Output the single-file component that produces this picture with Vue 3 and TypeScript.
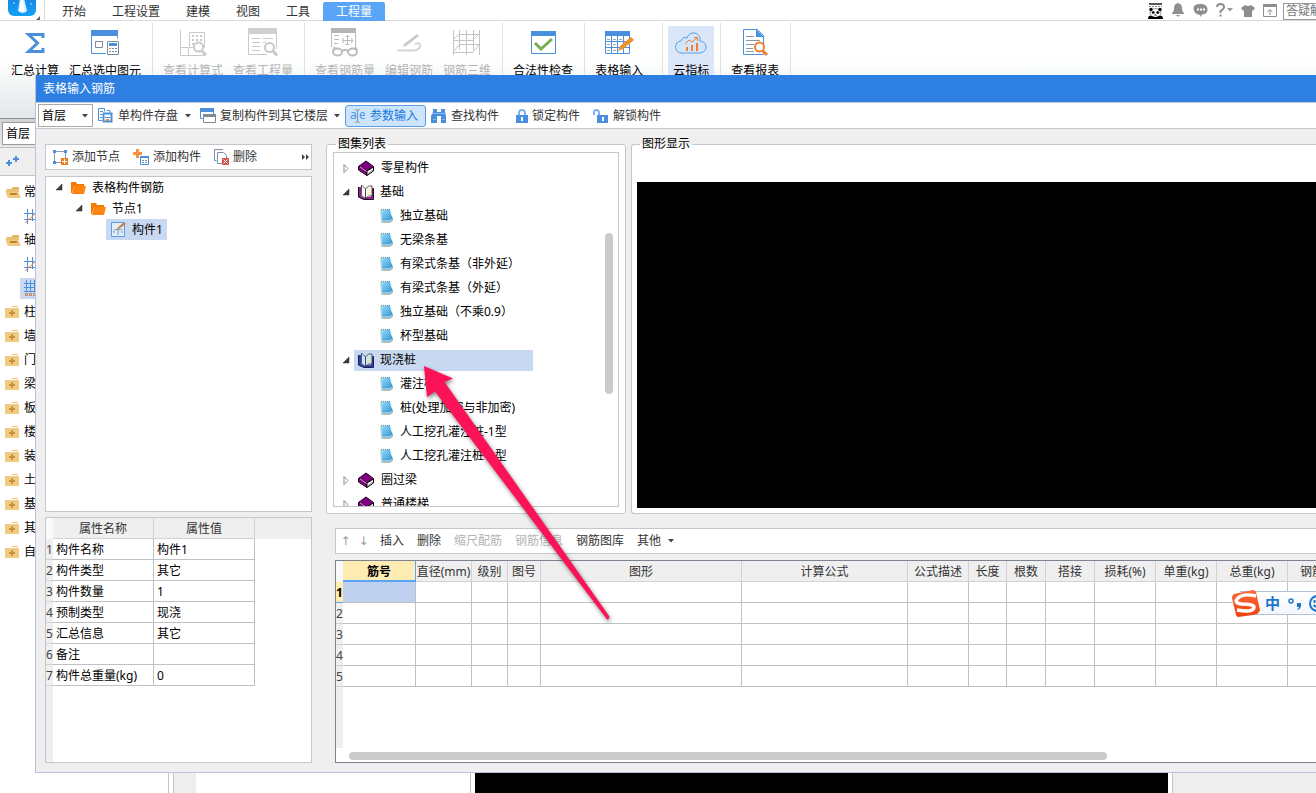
<script setup lang="ts">
import { h, ref } from 'vue'

const B = '#4a8fdd'
const G = '#c9c9c9'
const O = '#f08030'

const folderOpen =
  '<path d="M1 3h5l2-2h6v3H1z" fill="#e0b46a"/><path d="M0 5h13l3 7H3z" fill="#f0ca80"/><path d="M2 3h12v3H2z" fill="#e9bd70"/><path d="M5 8h7" stroke="#b98730" stroke-width="2"/>'
const openBook = (cover: string, page: string, line: string) =>
  `<path d="M0 3h3v9l5 3v1H6l-6-3z" fill="${cover}"/><path d="M7 13h6V4h3v11H7z" fill="${cover}"/><path d="M.5 3v10l6 2.500H15.500V5" fill="none" stroke="${line}"/><path d="M3.500 1l4 4v9.500l-4-3z" fill="${page}" stroke="${line}" stroke-width=".7"/><path d="M7.500 5l3-3h3.500v10h-3.500l-3 2.500z" fill="${page}" stroke="${line}" stroke-width=".7"/><path d="M10 4v7M12 4v7" stroke="#e6df3a" stroke-dasharray="1 1"/>`

const icons: Record<string, [number, number, string]> = {
  logo: [28, 18, `<defs><linearGradient id="lg" x1="0" y1="0" x2="0" y2="1"><stop offset="0" stop-color="#1b7fe0"/><stop offset="1" stop-color="#12a2f6"/></linearGradient></defs><path d="M0-8h28V10a6 6 0 0 1-6 6H6a6 6 0 0 1-6-6z" fill="url(#lg)"/><path d="M12-2h4l3 13q-4 4-9 0z" fill="#d6f1ff"/><path d="M13-2h2l1 13h-4z" fill="#fff"/><circle cx="6" cy="3" r="1" fill="#7fc6ff"/><circle cx="23" cy="4" r="1" fill="#7fc6ff"/>`],
  sigma: [32, 32, `<path d="M24 11V7.500H9.500l9 8.500-9 8.500H24V21" fill="none" stroke="${B}" stroke-width="3"/>`],
  calc: [32, 32, `<path d="M2 3h27v6H2z" fill="${B}"/><path d="M28.500 9v3" fill="none" stroke="#8fa3b8"/><path d="M2.500 9v17.500H17" fill="none" stroke="${B}"/><path d="M6.500 14.500h7v6h-7z" fill="none" stroke="#7c8b9a"/><path d="M18.500 14.500h11v13h-11z" fill="#fff" stroke="#7c8b9a"/><path d="M20 16h8v3h-8z" fill="${B}"/><path d="M20 21.500h9M20 24.500h9" stroke="#7c8b9a" stroke-dasharray="2 1"/><path d="M20 21h2v1h-2z" fill="${O}"/>`],
  formula: [32, 32, `<g fill="none" stroke="${G}"><path d="M3.500 3v25.500H28M3.500 20.500h8v8"/><path d="M12.500 5.500h15v15h-15z"/><path d="M15 9h11M15 13h11M15 17h4" stroke-width="2" stroke-dasharray="2 2"/><circle cx="21.500" cy="20" r="4.500" fill="#fff" stroke-width="2"/><path d="M25 24l4 4" stroke-width="3"/></g>`],
  quantity: [32, 32, `<path d="M1 1h29v6H1z" fill="#d0d0d0"/><g fill="none" stroke="${G}"><path d="M1.500 7v20.500H20M29.500 7v15"/><path d="M5 11.500h8M5 15.500h8M5 19.500h8M5 23.500h8M16 11.500h10M16 15.500h3" stroke-width="1"/><circle cx="22.500" cy="20.500" r="4.500" fill="#fff" stroke-width="2"/><path d="M26 24l4 4.500" stroke-width="3"/></g>`],
  rebar: [32, 32, `<path d="M2 1h25v5H2z" fill="#b5b5b5"/><g fill="none" stroke="#bdbdbd"><path d="M2.500 6v14M26.500 6v14M5 8.500h5M5 12.500h5M5 16.500h4M18.500 8v10M13 13.500h11"/><path d="M16.500 9.500h4M16.500 17.500h4M14.500 11q-2 2.500 0 5M22.500 11q2 2.500 0 5"/><ellipse cx="8.500" cy="25" rx="4.500" ry="3.500" stroke-width="2" fill="#fff"/><ellipse cx="23.500" cy="25" rx="4.500" ry="3.500" stroke-width="2" fill="#fff"/><path d="M13 24q3-2 6 0M4 23l2-3M28 23l-2-3" stroke-width="2"/></g>`],
  edit: [32, 32, `<path d="M11 17L24 7l2 2-13 10-3 1z" fill="${G}"/><path d="M4 23.500h17q6-1 6-5t-5-1" fill="none" stroke="#d4d4d4" stroke-width="2"/>`],
  frame3d: [32, 32, `<path d="M2.500 3v25M8.500 3v20M22.500 3v20M28.500 3v25M15.500 3v25M8 7.500h21M2 13.500h20M8 17.500h21M2 25.500h20M2 13l6-6M2 25l6-7M22 13l6-6M22 25l6-7" fill="none" stroke="#c4c4c4"/>`],
  check: [32, 32, `<path d="M4.500 4.500h24v22h-24z" fill="#fff" stroke="${B}"/><path d="M4 4h25v5H4z" fill="${B}"/><path d="M8 16l6 6L25 12" fill="none" stroke="#76ad52" stroke-width="3"/>`],
  grid: [32, 32, `<path d="M2.500 4.500h24v22h-24z" fill="#fff" stroke="${B}"/><path d="M2 4h25v5H2z" fill="${B}"/><path d="M8.500 9v17M14.500 9v17M20.500 9v17M2 14.500h25M2 20.500h25" stroke="${B}"/><path d="M4 12.500h3M10 12.500h3M16 12.500h3M4 17.500h3M10 17.500h3M4 23.500h3M10 23.500h3" stroke="#a0a8b2"/><path d="M15 24l2-5 11-9 3 3-11 9z" fill="#f0912b"/>`],
  cloud: [32, 32, `<path d="M7 26a6 6 0 0 1-1-12q2-5 6-3 2-6 8-5 6 2 5 8 6 1 6 6t-6 6z" fill="#d3e5fa" stroke="#5a9fe6"/><path d="M11 20h2v4h-2zM16 18h2v6h-2zM21 16h2v8h-2z" fill="${O}"/><path d="M10 17l4-4 3 2 5-4M19 10.500h3.500V14" fill="none" stroke="${O}"/>`],
  report: [32, 32, `<path d="M4.500 2.500h14l6 6v19h-20z" fill="#fff" stroke="${B}"/><path d="M17 2l8 8h-8z" fill="${B}"/><path d="M7 9.500h8M7 13.500h14M7 17.500h8M7 21.500h7M7 24.500h8" stroke="#8997a5"/><circle cx="20.500" cy="20" r="4.500" fill="#fff" stroke="${O}" stroke-width="2"/><path d="M24 24l4 4" stroke="${O}" stroke-width="3"/>`],
  panda: [15, 17, `<path d="M1 1h13v2H1z" fill="#555"/><path d="M1 4.500h13" stroke="#888" stroke-dasharray="2 1"/><ellipse cx="7.500" cy="11" rx="5.500" ry="4.500" fill="#fff" stroke="#555" stroke-width=".6"/><circle cx="3" cy="7.500" r="1.700"/><circle cx="12" cy="7.500" r="1.700"/><ellipse cx="5.200" cy="10.500" rx="1.500" ry="1.200"/><ellipse cx="9.800" cy="10.500" rx="1.500" ry="1.200"/><path d="M6.500 13h2" stroke="#000"/><path d="M0 17q0-4 4-3 3 2 7 0 4-1 4 3z"/>`],
  bell: [14, 14, '<path d="M7 0q4 1 4 5t2 5v1H1v-1q2-1 2-5t4-5zM5 12h4q-2 3-4 0z" fill="#8e8e8e"/>'],
  chat: [15, 14, '<path d="M7.500 1Q14 1 14.500 6T9 11.500L7 14V12Q1 11 .5 6T7.500 1z" fill="#8e8e8e"/><path d="M4 6.500h8" stroke="#fff" stroke-width="2" stroke-dasharray="2 1"/>'],
  help: [9, 14, '<path d="M1 4q0-3 3.500-3T8 4q0 2-3.500 4v2M4.500 11.500v2" fill="none" stroke="#8e8e8e" stroke-width="2"/>'],
  shirt: [14, 13, '<path d="M4 1q3 2 6 0l4 3-2 3-1-1v7H3V6L2 7 0 4z" fill="#8e8e8e"/>'],
  window: [14, 13, '<path d="M.5 .5h13v12H.5z" fill="#fff" stroke="#8e8e8e"/><path d="M0 0h14v3H0z" fill="#8e8e8e"/><path d="M7 11V6M4.500 8L7 5.500 9.500 8" fill="none" stroke="#8e8e8e"/>'],
  caret: [6, 4, '<path d="M0 0h6L3 3.500z" fill="#444"/>'],
  caretGrey: [6, 4, '<path d="M0 0h6L3 3.500z" fill="#999"/>'],
  save: [15, 15, `<path d="M4 12.500H.5v-12h6v3" fill="none" stroke="${B}"/><path d="M2 3.500h3M2 6.500h2M2 9.500h2M9 2.500h3v2" stroke="${B}" fill="none"/><path d="M5.500 5.500h8v8h-8z" fill="#fff" stroke="${B}" stroke-width="2"/><path d="M7 9h5v1H7z" fill="${B}"/><path d="M8 11h3v2H8z" fill="${O}"/>`],
  copy: [16, 15, `<path d="M.5 .5h13v10H.5z" fill="#fff" stroke="${B}"/><path d="M0 0h14v4H0z" fill="${B}"/><path d="M3.500 6.500h12v8h-12z" fill="#fff" stroke="#7c8b94"/><path d="M3 6h13v3H3z" fill="#7c8b94"/>`],
  cursor: [15, 14, '<path d="M5.500 .5q2 0 2 2v9q0 2-2 2M9.500 .5q-2 0-2 2v9q0 2 2 2" fill="none" stroke="#8190a0"/><text x="0" y="10" font-size="12" fill="#4a94e4">a</text><text x="9" y="10" font-size="12" fill="#4a94e4">e</text>'],
  find: [16, 15, `<path d="M2 1h4v3h4V1h4v3l1 4v7h-5V8H6v7H0V8l2-4z" fill="${B}"/><path d="M1 5.500h14M2 11.500h3M11 11.500h3" stroke="#86b8ee"/>`],
  lock: [12, 14, '<path d="M3 6V4q0-3 3-3t3 3v2" fill="none" stroke="#7fb2ec" stroke-width="2"/><path d="M0 6h12v8H0z" fill="#4a8fdd"/><path d="M5 8h2v4H5z" fill="#fff"/>'],
  unlock: [16, 14, '<path d="M1 6V4q0-3 2.500-3T6 4v3" fill="none" stroke="#7fb2ec" stroke-width="2"/><path d="M4 6h11v8H4z" fill="#4a8fdd"/><path d="M9 8h2v4H9z" fill="#fff"/>'],
  addNode: [15, 15, `<path d="M1.500 1.500h11v11h-11z" fill="none" stroke="#8c9aa6"/><path d="M0 0h3v3H0zM11 0h3v3h-3zM0 11h3v3H0z" fill="${B}"/><path d="M8 8h7v7H8z" fill="#ef7d22"/><path d="M9 11.500h5M11.500 9v5" stroke="#fff"/>`],
  addPart: [16, 16, `<path d="M3 0h3v3h3v3H6v3H3V6H0V3h3z" fill="#f59140"/><path d="M7.500 7.500h8v8h-8z" fill="#fff" stroke="${B}"/><path d="M7 7h9v2H7z" fill="${B}"/><path d="M9 11.500h6M9 13.500h6" stroke="#7c8b9a" stroke-dasharray="2 1"/>`],
  remove: [15, 16, `<path d="M9 .5H.5v11h2" fill="none" stroke="#8190a0"/><path d="M3.500 3.500h6l3 3v8h-9z" fill="#fff" stroke="#8190a0"/><path d="M8 9h7v7H8z" fill="#d95050"/><path d="M9.500 10.500l4 4M13.500 10.500l-4 4" stroke="#fff"/>`],
  more: [8, 6, '<path d="M0 0l3 3-3 3zM4 0l3 3-3 3z" fill="#444"/>'],
  expanded: [7, 7, '<path d="M6 0v6H0z" fill="#404040" stroke="#222" stroke-width=".5"/>'],
  collapsed: [6, 9, '<path d="M1 .5v8l4-4z" fill="#fff" stroke="#8c8c8c"/>'],
  folder: [15, 12, '<path d="M0 0h5l1 2h7v2H3L1 11H0z" fill="#f47a00"/><path d="M3 4h12l-2 8H1z" fill="#ff8410"/>'],
  part: [15, 15, '<path d="M.5 .5h13v14H.5z" fill="#e2edfb" stroke="#5a9fe6"/><path d="M2.500 9q1-2 4-1.500t5 0M7 6v7M3 9v2M11 9v2" fill="none" stroke="#7f95aa"/><path d="M6 6l7-6 2 2-7 5z" fill="#c98556"/>'],
  book: [17, 16, '<path d="M.5 6.500L8 1l7.500 5.500L9 11z" fill="#800080" stroke="#200020"/><path d="M.5 6.500v3.500L9 15.500V11z" fill="#800080" stroke="#200020"/><path d="M9 11l6.500-4v4L9 15.500z" fill="#fff" stroke="#000"/><path d="M10 13.500l5-3.500" stroke="#888"/><path d="M2 7l6.500 4.500" stroke="#e0a0e0"/>'],
  bookOpen: [16, 17, openBook('#9c1a9c', '#fff', '#111')],
  bookSelected: [16, 17, openBook('#3f3f98', '#cfe6f8', '#10205a')],
  page: [14, 16, '<defs><linearGradient id="pg" x1="0" y1="0" x2="1" y2="1"><stop offset="0" stop-color="#9be2fa"/><stop offset="1" stop-color="#2b8fd6"/></linearGradient></defs><path d="M0 2h2v11l-1 2z" fill="#cfe0d2"/><path d="M1 15l2-2 8-1 2-1v2l-3 2z" fill="#a7bcc4"/><path d="M1 2l9-1 1 5 2 5-3 1-8 1z" fill="url(#pg)"/><path d="M1 1.500h10" stroke="#6f8796" stroke-dasharray="1 1"/>'],
  plus2: [13, 10, `<path d="M0 7h6M3 4v6M7 3h6M10 0v6" stroke="${B}" stroke-width="2"/>`],
  folderOpen: [16, 13, folderOpen],
  folderClosed: [14, 13, '<path d="M7 0h6v1H7z" fill="#e9bd70"/><path d="M0 2h14v10H0z" fill="#f0ca80"/><path d="M4 7h6M7 4v6" stroke="#c6923c" stroke-width="2"/>'],
  axis: [14, 15, `<path d="M0 4.500h14M0 10.500h14M3.500 0v15M8.500 0v12" stroke="${B}"/><path d="M1 14L12 4" stroke="${O}"/>`],
  axisGrid: [14, 16, `<path d="M0 3.500h14M0 7.500h14M0 11.500h14M2.500 0v12M6.500 0v12M10.500 0v12" stroke="${B}"/><path d="M1.500 13.500h2v2h-2zM5.500 13.500h2v2h-2zM9.500 13.500h2v2h-2z" fill="none" stroke="#c9805a"/>`],
  sogou: [30, 29, '<defs><linearGradient id="sg" x1="0" y1="0" x2="0" y2="1"><stop offset="0" stop-color="#fb6a3a"/><stop offset="1" stop-color="#ee4210"/></linearGradient></defs><path d="M3 5L22 1q2 0 3 2l4 18q-1 4-7 5L7 28q-1 0-2-2L1 9q0-3 2-4z" fill="url(#sg)"/><path d="M25 7Q12 4 7 9t4 6q12 0 12 3 0 6-17 3" fill="none" stroke="#fff" stroke-width="3.500"/>'],
  punct: [13, 13, '<circle cx="3" cy="4" r="2" fill="none" stroke="#1f74cc" stroke-width="1.500"/><path d="M9 6h4v3q-1 4-4 4 2-2 2-3H9z" fill="#1f74cc"/>'],
  smile: [17, 17, '<circle cx="8.500" cy="8.500" r="7.500" fill="none" stroke="#1f74cc" stroke-width="2"/><path d="M5.500 5v3M11.500 5v3M4.500 10q4 4 8 0" fill="none" stroke="#1f74cc" stroke-width="2"/>'],
}

const Icon = (props: { name: string }) => {
  const [w, ht, body] = icons[props.name]
  return h('svg', { class: 'icon', width: w, height: ht, viewBox: `0 0 ${w} ${ht}`, 'aria-hidden': 'true', innerHTML: body })
}
Icon.props = ['name']

const tabs = ['开始', '工程设置', '建模', '视图', '工具', '工程量']
const activeTab = ref('工程量')

interface Tool { label: string; icon: string; off?: boolean; on?: boolean }
const ribbon: Tool[][] = [
  [{ label: '汇总计算', icon: 'sigma' }, { label: '汇总选中图元', icon: 'calc' }],
  [{ label: '查看计算式', icon: 'formula', off: true }, { label: '查看工程量', icon: 'quantity', off: true }],
  [{ label: '查看钢筋量', icon: 'rebar', off: true }, { label: '编辑钢筋', icon: 'edit', off: true }, { label: '钢筋三维', icon: 'frame3d', off: true }],
  [{ label: '合法性检查', icon: 'check' }],
  [{ label: '表格输入', icon: 'grid' }],
  [{ label: '云指标', icon: 'cloud', on: true }],
  [{ label: '查看报表', icon: 'report' }],
]

const navRows = [
  { icon: 'folderOpen', text: '常用构件' }, { icon: 'axis' },
  { icon: 'folderOpen', text: '轴线' }, { icon: 'axis' }, { icon: 'axisGrid', on: true },
  ...['柱', '墙', '门窗洞', '梁', '板', '楼梯', '装修', '土方', '基础', '其它', '自定义'].map(text => ({ icon: 'folderClosed', text })),
] as { icon: string; text?: string; on?: boolean }[]

const atlas = [
  { text: '零星构件', kind: 'book' },
  { text: '基础', kind: 'bookOpen' },
  { text: '独立基础', kind: 'page' },
  { text: '无梁条基', kind: 'page' },
  { text: '有梁式条基（非外延）', kind: 'page' },
  { text: '有梁式条基（外延）', kind: 'page' },
  { text: '独立基础（不乘0.9）', kind: 'page' },
  { text: '杯型基础', kind: 'page' },
  { text: '现浇桩', kind: 'bookSelected' },
  { text: '灌注桩', kind: 'page' },
  { text: '桩(处理加密与非加密)', kind: 'page' },
  { text: '人工挖孔灌注桩-1型', kind: 'page' },
  { text: '人工挖孔灌注桩-2型', kind: 'page' },
  { text: '圈过梁', kind: 'book' },
  { text: '普通楼梯', kind: 'book' },
]

const properties = [
  ['构件名称', '构件1'], ['构件类型', '其它'], ['构件数量', '1'], ['预制类型', '现浇'],
  ['汇总信息', '其它'], ['备注', ''], ['构件总重量(kg)', '0'],
]

const columns: [string, number][] = [
  ['筋号', 73], ['直径(mm)', 56], ['级别', 36], ['图号', 33], ['图形', 201], ['计算公式', 166], ['公式描述', 61],
  ['长度', 38], ['根数', 39], ['搭接', 49], ['损耗(%)', 61], ['单重(kg)', 61], ['总重(kg)', 71], ['钢筋归类', 73],
]
const gridWidth = columns.reduce((sum, c) => sum + c[1], 7)
</script>

<template>
  <div class="app">
    <header class="menu">
      <div class="brand"><Icon name="logo" /><span class="corner"></span></div>
      <nav class="tabs">
        <button v-for="t in tabs" :key="t" :class="{ active: t === activeTab }" @click="activeTab = t">{{ t }}</button>
      </nav>
      <div class="utilities">
        <button aria-label="社区"><Icon name="panda" /></button>
        <button aria-label="通知"><Icon name="bell" /></button>
        <button aria-label="消息"><Icon name="chat" /></button>
        <button class="help" aria-label="帮助"><Icon name="help" /><Icon name="caretGrey" /></button>
        <button aria-label="皮肤"><Icon name="shirt" /></button>
        <button aria-label="收起"><Icon name="window" /></button>
        <input class="search" aria-label="答疑解惑" value="答疑解惑" />
      </div>
    </header>

    <div class="ribbon">
      <div v-for="(group, i) in ribbon" :key="i" class="group" :class="{ wide: i === 4 }">
        <button v-for="tool in group" :key="tool.label" class="tool" :class="{ on: tool.on }" :disabled="tool.off">
          <Icon :name="tool.icon" /><span>{{ tool.label }}</span>
        </button>
      </div>
    </div>

    <div class="workspace">
      <aside class="nav">
        <div class="nav-floor">
          <select aria-label="楼层"><option>首层</option></select>
        </div>
        <div class="nav-tools"><Icon name="plus2" /></div>
        <ul class="nav-tree">
          <li v-for="(row, i) in navRows" :key="i" :class="{ sub: !row.text }">
            <span class="nav-icon" :class="{ on: row.on }"><Icon :name="row.icon" /></span>{{ row.text }}
          </li>
        </ul>
      </aside>
      <div class="strip"></div>
      <div class="list"></div>
      <div class="canvas"></div>
      <div class="dock"></div>
    </div>

    <section class="dialog" role="dialog" aria-label="表格输入钢筋">
      <h1>表格输入钢筋</h1>
      <div class="bar">
        <div class="floor">
          <select aria-label="选择楼层"><option>首层</option></select>
          <Icon name="caret" />
        </div>
        <button class="b-save"><Icon name="save" />单构件存盘<Icon name="caret" /></button>
        <button class="b-copy"><Icon name="copy" />复制构件到其它楼层<Icon name="caret" /></button>
        <button class="b-param"><Icon name="cursor" />参数输入</button>
        <button class="b-find"><Icon name="find" />查找构件</button>
        <button class="b-lock"><Icon name="lock" />锁定构件</button>
        <button class="b-lock"><Icon name="unlock" />解锁构件</button>
      </div>

      <div class="body">
        <div class="left">
          <div class="strip-bar part-bar">
            <button><Icon name="addNode" />添加节点</button>
            <button><Icon name="addPart" />添加构件</button>
            <button><Icon name="remove" />删除</button>
            <button class="more" aria-label="更多"><Icon name="more" /></button>
          </div>
          <ul class="parts">
            <li><Icon name="expanded" /><Icon name="folder" />表格构件钢筋</li>
            <li class="l2"><Icon name="expanded" /><Icon name="folder" />节点1</li>
            <li class="l3"><span class="picked"><Icon name="part" />构件1</span></li>
          </ul>
          <div class="props">
            <table>
              <thead><tr><th class="num corner-cell"></th><th class="name">属性名称</th><th class="value">属性值</th><th class="rest"></th></tr></thead>
              <tbody>
                <tr v-for="(p, i) in properties" :key="p[0]">
                  <th class="num">{{ i + 1 }}</th><td>{{ p[0] }}</td><td>{{ p[1] }}</td><td class="rest"></td>
                </tr>
              </tbody>
            </table>
            <div class="gutter"></div>
          </div>
        </div>

        <div class="right">
          <div class="boxes">
            <fieldset class="atlas">
              <legend>图集列表</legend>
              <div class="atlas-frame">
                <ul>
                  <li v-for="node in atlas" :key="node.text" :class="{ leaf: node.kind === 'page' }">
                    <span v-if="node.kind !== 'page'" class="twist"><Icon :name="node.kind === 'book' ? 'collapsed' : 'expanded'" /></span>
                    <span class="node" :class="{ picked: node.kind === 'bookSelected' }"><Icon :name="node.kind" />{{ node.text }}</span>
                  </li>
                </ul>
                <div class="v-thumb"></div>
              </div>
            </fieldset>
            <fieldset class="view">
              <legend>图形显示</legend>
              <div class="stage"></div>
            </fieldset>
          </div>

          <div class="strip-bar grid-bar">
            <button class="arrow up" disabled aria-label="上移">↑</button>
            <button class="arrow" disabled aria-label="下移">↓</button>
            <button>插入</button>
            <button>删除</button>
            <button disabled>缩尺配筋</button>
            <button disabled>钢筋信息</button>
            <button>钢筋图库</button>
            <button>其他<Icon name="caret" /></button>
          </div>

          <div class="grid">
            <div class="grid-view">
              <table :style="{ width: gridWidth + 'px' }">
                <colgroup><col class="num-col" /><col v-for="c in columns" :key="c[0]" :style="{ width: c[1] + 'px' }" /></colgroup>
                <thead><tr><th class="num corner-cell"></th><th v-for="(c, i) in columns" :key="c[0]" :class="{ current: i === 0 }">{{ c[0] }}</th></tr></thead>
                <tbody>
                  <tr v-for="r in 5" :key="r">
                    <th class="num" :class="{ current: r === 1 }">{{ r }}</th>
                    <td v-for="(c, i) in columns" :key="c[0]" :class="{ cell: r === 1 && i === 0 }"></td>
                  </tr>
                </tbody>
              </table>
              <div class="gutter"></div>
            </div>
            <div class="h-track"><div class="h-thumb"></div></div>
          </div>
        </div>
      </div>
    </section>

    <svg class="pointer" width="200" height="268" viewBox="0 0 200 268" aria-hidden="true">
      <path d="M4 4L33 16.500 24.500 20 189 254Q190 256 188 257.500 187 258 186 256L15 29.500 7 35z" fill="#fc1257" />
    </svg>

    <div class="ime">
      <Icon name="sogou" /><span>中</span><Icon name="punct" /><Icon name="smile" />
    </div>
  </div>
</template>

<style>
body { margin: 0; overflow: hidden; }
.icon { display: block; flex: none; }
</style>

<style scoped>
.app {
  position: relative; display: flex; flex-direction: column; height: 100vh; overflow: hidden; background: #fff;
  font: 12px/20px "Noto Sans", "Noto Sans CJK SC", sans-serif; color: #000;
}
.app * { box-sizing: border-box; }
button { display: flex; align-items: center; border: 0; padding: 0; margin: 0; background: none; font: inherit; color: inherit; white-space: nowrap; flex: none; }
button:disabled { color: #b4b4b4; }
select, input { font: inherit; color: inherit; border-radius: 0; }
ul { list-style: none; margin: 0; padding: 0; }
table { border-collapse: separate; border-spacing: 0; table-layout: fixed; }

.menu { display: flex; flex: none; height: 21px; border-bottom: 1px solid #d9d9d9; }
.brand { display: flex; width: 45px; padding-left: 8px; border-right: 1px solid #d9d9d9; }
.corner { align-self: flex-end; border-left: 4px solid transparent; border-bottom: 4px solid #666; }
.tabs { display: flex; padding: 2px 0 0 4px; }
.tabs button { padding: 0 13px; height: 19px; color: #333; }
.tabs .active { background: #5aa5f7; color: #fff; border-radius: 2px 2px 0 0; }
.utilities { display: flex; align-items: center; margin-left: auto; gap: 8px; }
.help { gap: 2px; }
.search { width: 33px; height: 17px; margin: 2px 0 0 -2px; padding: 0 0 0 2px; border: 1px solid #999; border-right: 0; color: #777; }

.ribbon { display: flex; flex: none; height: 98px; padding-left: 1px; border-bottom: 1px solid #8c8f92; background: linear-gradient(#fff 40%, #e2e7e9); }
.group { display: flex; margin-top: 2px; padding: 3px 6px 0 5px; border-right: 1px solid #e0e0e0; }
.group.wide { padding-right: 14px; }
.tool { flex-direction: column; padding: 1px 5px 0; height: 60px; gap: 2px; }
.tool.on { background: #dbe7f8; }

.workspace { display: flex; flex: 1; min-height: 0; }
.nav { width: 169px; border-right: 1px solid #c4c4c4; flex: none; overflow: hidden; }
.nav-floor { height: 29px; padding: 3px 3px 0 2px; background: linear-gradient(#cfd2d6, #e8e9eb); border-bottom: 1px solid #c0c0c0; }
.nav-floor select { width: 150px; height: 23px; border: 1px solid #999; background: #fff; appearance: none; padding: 0 3px; }
.nav-tools { height: 28px; padding: 8px 6px; background: #efefef; border-bottom: 1px solid #c4c4c4; }
.nav-tree { padding-top: 4px; }
.nav-tree li { display: flex; align-items: center; height: 24px; padding-left: 4px; white-space: nowrap; }
.nav-icon { display: flex; align-items: center; width: 20px; height: 21px; padding-left: 1px; }
.nav-tree .sub { padding-left: 20px; }
.sub .nav-icon { width: 100px; padding-left: 4px; }
.nav-icon.on { background: #c8d9f1; }
.strip { width: 23px; margin-left: 4px; border-left: 1px solid #c4c4c4; background: #eee; flex: none; }
.list { width: 275px; border-right: 1px solid #c4c4c4; flex: none; }
.canvas { flex: 1; margin: 0 4px; background: #000; }
.dock { width: 144px; border-left: 1px solid #c4c4c4; background: #eee; flex: none; }

.dialog {
  position: absolute; left: 35px; right: 0; top: 75px; bottom: 20px; display: flex; flex-direction: column;
  background: #efefef; border: solid #b9c3da; border-width: 0 0 1px 1px; overflow: hidden;
}
h1 { flex: none; margin: 0; height: 27px; padding-left: 7px; background: #2d7fe1; color: #fff; font: inherit; line-height: 28px; }
.bar { display: flex; align-items: center; flex: none; height: 27px; padding-left: 2px; background: #fff; border: solid #c6c8cc; border-width: 1px 0; color: #333; }
.floor { display: flex; align-items: center; width: 55px; height: 23px; border: 1px solid #a9a9a9; color: #000; padding-right: 4px; }
.floor select { flex: 1; min-width: 0; border: 0; background: none; appearance: none; padding: 0 0 0 3px; }
.b-save { margin-left: 5px; gap: 5px; }
.b-save .icon:last-child, .b-copy .icon:last-child { margin-left: 2px; }
.b-copy { margin-left: 9px; gap: 4px; }
.b-param { margin-left: 5px; width: 81px; height: 22px; padding-left: 4px; gap: 5px; border: 1px solid #5a9fe6; border-radius: 3px; background: #cce4fc; color: #1878e0; }
.b-find { margin-left: 5px; gap: 4px; }
.b-lock { margin-left: 17px; gap: 4px; }
.b-lock + .b-lock { margin-left: 13px; }

.body { display: flex; flex: 1; min-height: 0; padding: 7px 0 9px 9px; gap: 14px; }
.left { display: flex; flex-direction: column; width: 267px; flex: none; padding-top: 8px; }
.strip-bar { display: flex; align-items: center; flex: none; height: 26px; background: #fff; border: 1px solid #c4c6ca; color: #333; }
.part-bar { padding: 0 1px 0 7px; gap: 13px; margin-bottom: 6px; }
.part-bar button { gap: 4px; }
.part-bar .more { margin-left: auto; }
.parts { flex: 1; min-height: 0; background: #fff; border: 1px solid #c4c6ca; margin-bottom: 5px; }
.parts li { display: flex; align-items: center; height: 21px; padding-left: 10px; }
.parts li > .icon:first-child { margin-right: 8px; }
.parts li > .icon + .icon { margin-right: 6px; }
.parts .l2 { padding-left: 30px; }
.parts .l3 { padding-left: 60px; }
.picked { background: #c8d9f1; }
.parts .picked { display: flex; align-items: center; gap: 6px; height: 21px; padding: 0 4px 0 5px; }

.props { display: flex; flex-direction: column; flex: none; height: 246px; background: #fff; border: 1px solid #c4c6ca; }
.props table { width: 100%; }
th, td { height: 21px; padding: 2px 0 0; font-weight: normal; line-height: 18px; white-space: nowrap; border: solid #c0c1c5; border-width: 0 1px 1px 0; }
thead th { background: #efefef; color: #333; border-color: #d2d2d4; }
.num { width: 7px; background: #efefef; color: #444; border-color: #d2d2d4; border-right-width: 0; }
thead .corner-cell { background: #fafafa; border: 0; }
.props .name, .props .value { width: 101px; }
.props .rest { border: 0; }
.props td { padding-left: 3px; }
.gutter { flex: 1; width: 7px; background: #efefef; }

.right { display: flex; flex-direction: column; flex: 1; min-width: 0; }
.boxes { display: flex; flex: 1; min-height: 0; gap: 5px; margin-bottom: 14px; }
fieldset { display: flex; flex-direction: column; min-width: 0; margin: 0; border: 1px solid #c4c6ca; border-radius: 3px; background: #fff; }
legend { margin-left: 3px; padding: 0 2px; height: 16px; line-height: 16px; }
.atlas { width: 300px; flex: none; padding: 0 6px 6px; margin: 0; }
.atlas-frame { display: flex; flex: 1; min-height: 0; border: 1px solid #c4c6ca; overflow: hidden; }
.atlas ul { flex: 1; height: 0; padding-top: 3px; }
.atlas li { display: flex; align-items: center; height: 24px; padding-left: 9px; }
.atlas .leaf { padding-left: 46px; }
.twist { width: 11px; }
.node { display: flex; align-items: center; gap: 6px; height: 21px; padding-left: 4px; white-space: nowrap; }
.leaf .node { padding-left: 0; }
.atlas .node.picked { width: 179px; }
.v-thumb { width: 8px; height: 161px; margin: 80px 5px 0 0; border-radius: 4px; background: #cbcbcb; flex: none; }
.view { flex: 1; padding: 30px 0 5px 5px; border-right: 0; border-radius: 3px 0 0 3px; }
.stage { flex: 1; background: #000; }

.grid-bar { margin: 0 0 6px 9px; border-right: 0; padding-left: 6px; gap: 13px; }
.grid-bar .icon { margin-left: 7px; }
.grid-bar .arrow { width: 7px; justify-content: center; color: #9a9a9a; font-family: "DejaVu Sans", sans-serif; }
.grid-bar .up { margin-right: -2px; }
.grid { display: flex; flex-direction: column; flex: none; height: 203px; margin-left: 9px; background: #fff; border: 1px solid #7f8290; border-right: 0; overflow: hidden; }
.grid-view { display: flex; flex-direction: column; flex: 1; min-height: 0; overflow: hidden; }
.grid-view table { flex: none; }
.num-col { width: 7px; }
.grid thead .current { background: #ffecb3; border-color: #5aa5f7; box-shadow: inset 0 -1px #5aa5f7; font-weight: bold; color: #000; }
.grid .num.current { background: #ffecb3; border-color: #5aa5f7; font-weight: bold; color: #000; }
.grid .cell { background: #c0d1f0; }
.h-track { flex: none; height: 14px; padding: 4px 209px 0 13px; }
.h-thumb { height: 8px; border-radius: 4px; background: #cbcbcb; }

.pointer { position: absolute; left: 420px; top: 362px; pointer-events: none; filter: drop-shadow(1px 2px 2px rgba(0, 0, 0, 0.5)); }
.ime {
  position: absolute; right: 0; top: 591px; display: flex; align-items: center; width: 76px; height: 24px; gap: 8px;
  background: linear-gradient(#fff, #f2f6fb); border: 1px solid #b3c1d1; border-width: 1px 0; color: #1f74cc; font-size: 15px; font-weight: bold; overflow: visible;
}
.ime .icon:first-child { margin: 0 -4px 0 -9px; }
</style>
